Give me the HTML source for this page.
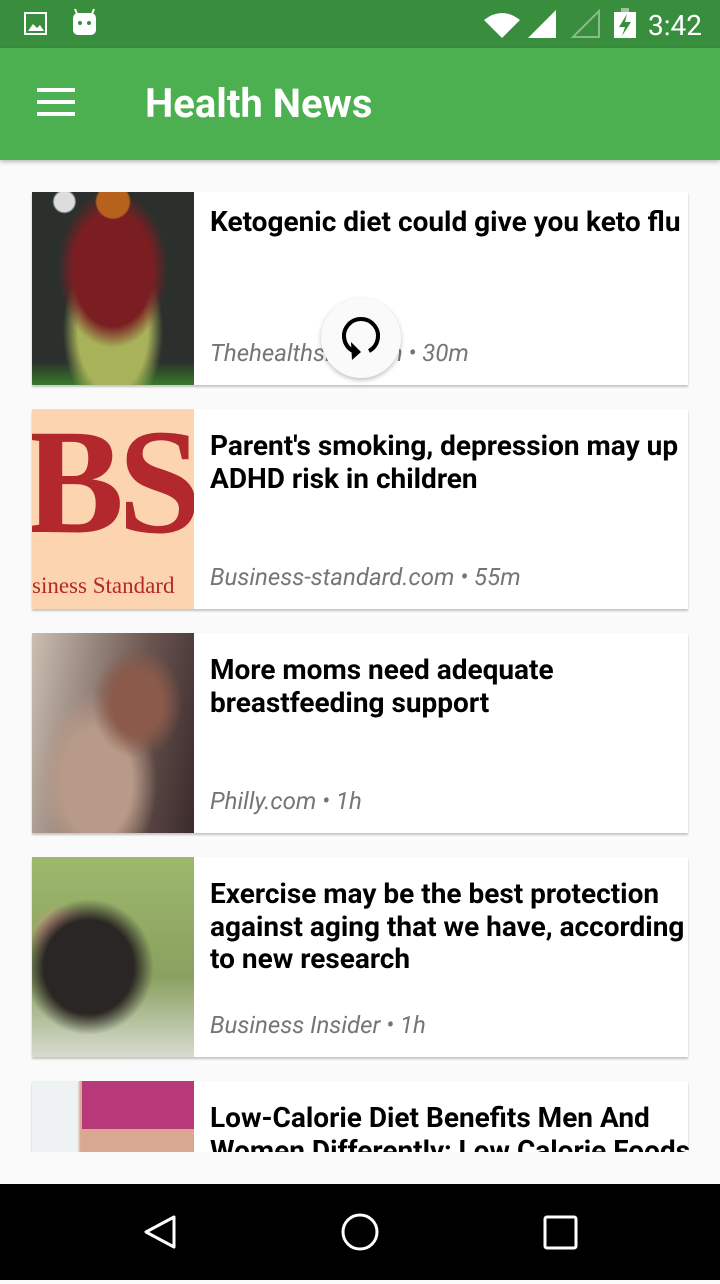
<!DOCTYPE html>
<html><head><meta charset="utf-8"><style>
*{margin:0;padding:0;box-sizing:border-box}
body{width:720px;height:1280px;position:relative;overflow:hidden;background:#fafafa;font-family:"Roboto","Liberation Sans",sans-serif}
.sb{position:absolute;top:0;left:0;width:720px;height:48px;background:#388e3c}
.tb{position:absolute;top:48px;left:0;width:720px;height:112px;background:#4caf50;box-shadow:0 2px 4px rgba(0,0,0,.25)}
.tb h1{position:absolute;left:145px;top:32px;color:#fff;font-size:40px;font-weight:bold;white-space:nowrap}
.ham{position:absolute;left:37px;width:38px;height:4px;background:#fff}
.list{position:absolute;top:160px;left:0;width:720px;height:992px;overflow:hidden}
.card{position:absolute;left:32px;width:656px;background:#fff;box-shadow:0 2px 2px rgba(0,0,0,.22)}
.img{position:absolute;left:0;top:0;width:162px;height:100%;overflow:hidden}
.t{position:absolute;left:178px;font-size:28px;font-weight:bold;color:#000;white-space:nowrap;line-height:33px}
.m{position:absolute;left:178px;font-size:24px;font-style:italic;color:#757575;white-space:nowrap}
.nav{position:absolute;top:1184px;left:0;width:720px;height:96px;background:#000}
</style></head><body>
<div class="sb">
<svg width="720" height="48" style="position:absolute;left:0;top:0">
<rect x="25" y="13" width="21" height="21" fill="none" stroke="#fff" stroke-width="2"/><path d="M28 31 L33 24 L37 28 L40 25 L44 31Z" fill="#fff"/>
<rect x="73" y="13" width="23" height="22" rx="5" fill="#fff"/><circle cx="80" cy="23" r="2" fill="#388e3c"/><circle cx="89" cy="23" r="2" fill="#388e3c"/><path d="M77 14 L75 9 M92 14 L94 9" stroke="#fff" stroke-width="2"/>
<path d="M484 20 Q502 6 520 20 L502 38Z" fill="#fff"/>
<path d="M528 38 L556 10 L556 38Z" fill="#fff"/><path d="M548 38 L556 10 L556 38Z" fill="#fff" opacity=".3"/>
<path d="M573 37 L599 11 L599 37Z" fill="none" stroke="#fff" stroke-opacity=".4" stroke-width="2"/>
<rect x="614" y="12" width="22" height="26" fill="#fff"/><rect x="621" y="8" width="8" height="5" fill="#fff" opacity=".5"/><path d="M627 14 L619 27 L625 27 L622 36 L631 22 L625 22Z" fill="#388e3c"/>
<text x="648" y="35" fill="#fff" font-size="28" font-family="Roboto, Liberation Sans">3:42</text>
</svg></div>
<div class="tb"><div class="ham" style="top:40px"></div><div class="ham" style="top:52px"></div><div class="ham" style="top:64px"></div><h1>Health News</h1></div>
<div class="list">
<div class="card" style="top:32px;height:193px">
<div class="img" style="background:radial-gradient(circle at 20% 5%,#ddd 0 10px,transparent 12px),radial-gradient(circle at 50% 5%,#b7621c 0 16px,transparent 18px),radial-gradient(ellipse at 50% 40%,#7a1e22 0 40px,transparent 55px),radial-gradient(ellipse at 50% 72%,#a8b25a 0 35px,transparent 50px),linear-gradient(#2b302d,#2b302d 88%,#3a7a2a)"></div>
<div class="t" style="top:13px">Ketogenic diet could give you keto flu</div>
<div class="m" style="top:147px">Thehealthsite.com • 30m</div>
</div>
<div class="card" style="top:249px;height:200px">
<div class="img" style="background:#fcd4b0"><div style="position:absolute;left:-8px;top:-2px;font-family:'Liberation Serif',serif;font-weight:bold;font-size:150px;color:#b3282d;letter-spacing:-6px;line-height:1">BS</div><div style="position:absolute;left:0;top:164px;font-family:'Liberation Serif',serif;font-size:23px;color:#b3282d;white-space:nowrap">siness Standard</div></div>
<div class="t" style="top:20px">Parent's smoking, depression may up</div>
<div class="t" style="top:53px">ADHD risk in children</div>
<div class="m" style="top:154px">Business-standard.com • 55m</div>
</div>
<div class="card" style="top:473px;height:200px">
<div class="img" style="background:radial-gradient(ellipse at 65% 35%,#8a5a4a 0 25px,transparent 45px),radial-gradient(ellipse at 40% 75%,#b89a88 0 35px,transparent 60px),linear-gradient(100deg,#cbbfb2,#6b5650 60%,#3a2a2c)"></div>
<div class="t" style="top:20px">More moms need adequate</div>
<div class="t" style="top:53px">breastfeeding support</div>
<div class="m" style="top:154px">Philly.com • 1h</div>
</div>
<div class="card" style="top:697px;height:200px">
<div class="img" style="background:radial-gradient(ellipse at 35% 55%,#2a2624 0 45px,transparent 65px),radial-gradient(ellipse at 20% 40%,#c49a80 0 20px,transparent 35px),linear-gradient(#9db86c,#8aa060 60%,#d7dcd0)"></div>
<div class="t" style="top:20px">Exercise may be the best protection</div>
<div class="t" style="top:53px">against aging that we have, according</div>
<div class="t" style="top:85px">to new research</div>
<div class="m" style="top:154px">Business Insider • 1h</div>
</div>
<div class="card" style="top:921px;height:200px">
<div class="img" style="background:linear-gradient(90deg,#eef2f2 0 28%,#d8a890 30%,#d8a890 100%)"><div style="position:absolute;left:50px;top:0;width:112px;height:48px;background:#b8397a"></div></div>
<div class="t" style="top:20px">Low-Calorie Diet Benefits Men And</div>
<div class="t" style="top:53px">Women Differently; Low Calorie Foods</div>
</div>
</div>
<div style="position:absolute;left:321px;top:298px;width:80px;height:80px;border-radius:50%;background:#fafafa;box-shadow:0 2px 5px rgba(0,0,0,.25)">
<svg width="80" height="80"><path d="M32 53 A17 17 0 1 1 48 53" fill="none" stroke="#000" stroke-width="4"/><path d="M30 44 L40 54 L31 62Z" fill="#000"/></svg></div>
<div class="nav"><svg width="720" height="96">
<path d="M174 33 L146 48 L174 63Z" fill="none" stroke="#fff" stroke-width="3" stroke-linejoin="round"/>
<circle cx="360" cy="48" r="17" fill="none" stroke="#fff" stroke-width="3"/>
<rect x="545" y="33" width="31" height="31" rx="2" fill="none" stroke="#fff" stroke-width="3"/>
</svg></div>
</body></html>
